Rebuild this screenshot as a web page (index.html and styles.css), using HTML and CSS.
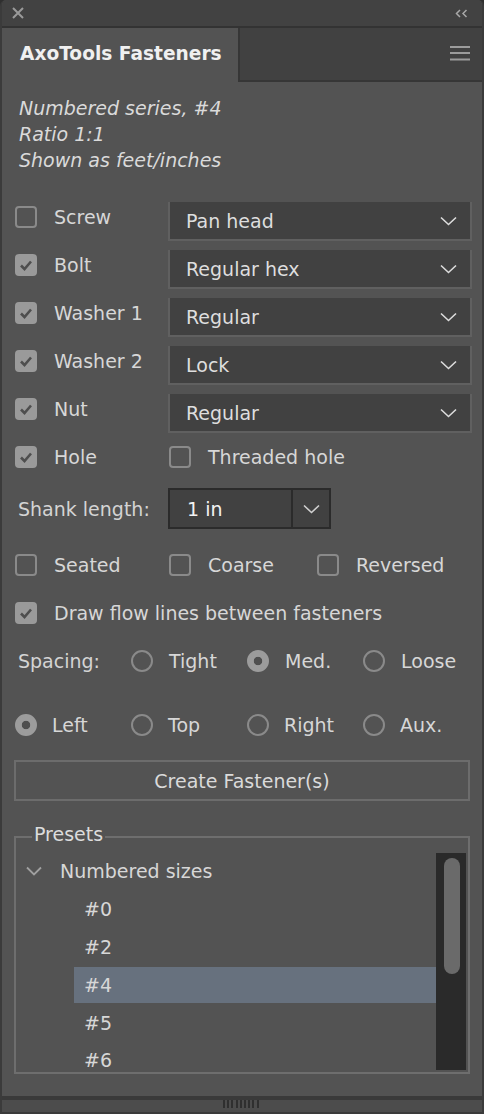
FILE: index.html
```html
<!DOCTYPE html>
<html>
<head>
<meta charset="utf-8">
<link rel="stylesheet" href="styles.css">
</head>
<body>
<div class="window">
  <div class="titlebar">
    <svg class="close" width="12" height="12" viewBox="0 0 12 12"><path d="M1 1L11 11M11 1L1 11" stroke="#9a9a9a" stroke-width="2" fill="none"/></svg>
    <svg class="collapse" width="13" height="9" viewBox="0 0 13 9"><path d="M5 1L1.5 4.5L5 8M11.5 1L8 4.5L11.5 8" stroke="#a8a8a8" stroke-width="1.5" fill="none"/></svg>
  </div>
  <div class="tabs">
    <div class="tab active">AxoTools Fasteners</div>
    <div class="tab-rest">
      <svg width="20" height="15" viewBox="0 0 20 15"><path d="M0 1H20M0 7H20M0 13.5H20" stroke="#9c9c9c" stroke-width="2"/></svg>
    </div>
  </div>
  <div class="content">
    <div class="info">
      <div>Numbered series, #4</div>
      <div>Ratio 1:1</div>
      <div>Shown as feet/inches</div>
    </div>

    <div class="fields">
      <div class="sel-row">
        <label class="cb-item left"><span class="cb"></span><span>Screw</span></label>
        <div class="dropdown"><span>Pan head</span><svg class="chev" width="17" height="10" viewBox="0 0 17 10"><path d="M1 1.5L8.5 8.5L16 1.5" stroke="#dcdcdc" stroke-width="1.6" fill="none"/></svg></div>
      </div>
      <div class="sel-row">
        <label class="cb-item left"><span class="cb on"><svg width="22" height="22" viewBox="0 0 22 22"><path d="M6 11.5L9.5 15L16 7.5" stroke="#4e4e4e" stroke-width="2.6" fill="none"/></svg></span><span>Bolt</span></label>
        <div class="dropdown"><span>Regular hex</span><svg class="chev" width="17" height="10" viewBox="0 0 17 10"><path d="M1 1.5L8.5 8.5L16 1.5" stroke="#dcdcdc" stroke-width="1.6" fill="none"/></svg></div>
      </div>
      <div class="sel-row">
        <label class="cb-item left"><span class="cb on"><svg width="22" height="22" viewBox="0 0 22 22"><path d="M6 11.5L9.5 15L16 7.5" stroke="#4e4e4e" stroke-width="2.6" fill="none"/></svg></span><span>Washer 1</span></label>
        <div class="dropdown"><span>Regular</span><svg class="chev" width="17" height="10" viewBox="0 0 17 10"><path d="M1 1.5L8.5 8.5L16 1.5" stroke="#dcdcdc" stroke-width="1.6" fill="none"/></svg></div>
      </div>
      <div class="sel-row">
        <label class="cb-item left"><span class="cb on"><svg width="22" height="22" viewBox="0 0 22 22"><path d="M6 11.5L9.5 15L16 7.5" stroke="#4e4e4e" stroke-width="2.6" fill="none"/></svg></span><span>Washer 2</span></label>
        <div class="dropdown"><span>Lock</span><svg class="chev" width="17" height="10" viewBox="0 0 17 10"><path d="M1 1.5L8.5 8.5L16 1.5" stroke="#dcdcdc" stroke-width="1.6" fill="none"/></svg></div>
      </div>
      <div class="sel-row">
        <label class="cb-item left"><span class="cb on"><svg width="22" height="22" viewBox="0 0 22 22"><path d="M6 11.5L9.5 15L16 7.5" stroke="#4e4e4e" stroke-width="2.6" fill="none"/></svg></span><span>Nut</span></label>
        <div class="dropdown"><span>Regular</span><svg class="chev" width="17" height="10" viewBox="0 0 17 10"><path d="M1 1.5L8.5 8.5L16 1.5" stroke="#dcdcdc" stroke-width="1.6" fill="none"/></svg></div>
      </div>
      <div class="hole-row">
        <label class="cb-item left"><span class="cb on"><svg width="22" height="22" viewBox="0 0 22 22"><path d="M6 11.5L9.5 15L16 7.5" stroke="#4e4e4e" stroke-width="2.6" fill="none"/></svg></span><span>Hole</span></label>
        <label class="cb-item"><span class="cb"></span><span>Threaded hole</span></label>
      </div>
      <div class="shank-row">
        <span class="shank-label">Shank length:</span>
        <div class="combo">
          <span class="combo-text">1 in</span>
          <span class="combo-btn"><svg width="17" height="10" viewBox="0 0 17 10"><path d="M1 1.5L8.5 8.5L16 1.5" stroke="#d0d0d0" stroke-width="1.6" fill="none"/></svg></span>
        </div>
      </div>
      <div class="opt-row">
        <label class="cb-item"><span class="cb"></span><span>Seated</span></label>
        <label class="cb-item"><span class="cb"></span><span>Coarse</span></label>
        <label class="cb-item"><span class="cb"></span><span>Reversed</span></label>
      </div>
      <div class="flow-row">
        <label class="cb-item"><span class="cb on"><svg width="22" height="22" viewBox="0 0 22 22"><path d="M6 11.5L9.5 15L16 7.5" stroke="#4e4e4e" stroke-width="2.6" fill="none"/></svg></span><span>Draw flow lines between fasteners</span></label>
      </div>
      <div class="radio-row spacing">
        <span class="radio-label">Spacing:</span>
        <label class="rb-item"><span class="rb"></span><span>Tight</span></label>
        <label class="rb-item"><span class="rb on"></span><span>Med.</span></label>
        <label class="rb-item"><span class="rb"></span><span>Loose</span></label>
      </div>
      <div class="radio-row position">
        <label class="rb-item"><span class="rb on"></span><span>Left</span></label>
        <label class="rb-item"><span class="rb"></span><span>Top</span></label>
        <label class="rb-item"><span class="rb"></span><span>Right</span></label>
        <label class="rb-item"><span class="rb"></span><span>Aux.</span></label>
      </div>
      <div class="button">Create Fastener(s)</div>

      <fieldset class="group">
        <legend>Presets</legend>
        <div class="list">
          <div class="tree">
            <div class="tree-row parent"><svg class="tchev" width="16" height="10" viewBox="0 0 16 10"><path d="M1 1.5L8 8.5L15 1.5" stroke="#a0a0a0" stroke-width="1.8" fill="none"/></svg><span>Numbered sizes</span></div>
            <div class="tree-row item">#0</div>
            <div class="tree-row item">#2</div>
            <div class="tree-row item selected">#4</div>
            <div class="tree-row item">#5</div>
            <div class="tree-row item last">#6</div>
          </div>
          <div class="scrollbar"><div class="thumb"></div></div>
        </div>
      </fieldset>
    </div>
  </div>
  <div class="footer"><div class="grip"></div></div>
</div>
</body>
</html>
```

FILE: styles.css
```css
* { box-sizing: border-box; }
html, body { margin: 0; padding: 0; background: #2f2f2f; }
body {
  font-family: "DejaVu Sans", "Liberation Sans", sans-serif;
  font-size: 19px;
  color: #d7d7d7;
}
.window {
  width: 484px;
  height: 1114px;
  display: flex;
  flex-direction: column;
  background: #535353;
  border-left: 2px solid #3b3b3b;
  border-right: 2px solid #3b3b3b;
  border-radius: 6px 6px 0 0;
  overflow: hidden;
}
.titlebar {
  height: 28px;
  flex: none;
  background: #424242;
  border-bottom: 2px solid #333333;
  display: flex;
  align-items: center;
  justify-content: space-between;
  padding: 0 14px 0 10px;
}
.tabs {
  height: 54px;
  flex: none;
  display: flex;
}
.tab.active {
  width: 236px;
  background: #535353;
  color: #f0f0f0;
  font-weight: bold;
  font-size: 18.6px;
  padding-left: 18px;
  display: flex;
  align-items: center;
  padding-bottom: 4px;
}
.tab-rest {
  flex: 1;
  background: #414141;
  border-left: 2px solid #363636;
  border-bottom: 2px solid #363636;
  display: flex;
  align-items: center;
  justify-content: flex-end;
  padding-right: 12px;
  padding-bottom: 2px;
}
.content {
  flex: 1;
  padding: 13px 10px 0 13px;
}
.info {
  font-style: italic;
  line-height: 26px;
  padding-left: 4px;
  color: #dadada;
}
.fields { margin-top: 29px; }
.cb-item, .rb-item {
  display: flex;
  align-items: center;
  gap: 17px;
}
.cb {
  width: 22px;
  height: 22px;
  flex: none;
  border: 2px solid #8a8a8a;
  border-radius: 4px;
  display: flex;
}
.cb.on {
  background: #9a9a9a;
  border-color: #9a9a9a;
}
.cb.on svg { margin: -2px; }
.rb {
  width: 22px;
  height: 22px;
  flex: none;
  border: 2px solid #8a8a8a;
  border-radius: 50%;
}
.rb.on {
  background: radial-gradient(circle, #4f4f4f 0 3.8px, #9c9c9c 4.6px);
  border-color: #9c9c9c;
}
.sel-row {
  display: flex;
  height: 39px;
  margin-bottom: 9px;
}
.left {
  width: 153px;
  height: 30px;
  flex: none;
}
.dropdown {
  width: 304px;
  height: 39px;
  background: #414141;
  border: 2px solid #606060;
  border-top: none;
  display: flex;
  align-items: center;
  justify-content: space-between;
  padding: 0 13px 0 16px;
  color: #dedede;
}
.hole-row {
  display: flex;
  height: 30px;
  margin-bottom: 16px;
}
.hole-row .left { width: 154px; }
.shank-row {
  display: flex;
  align-items: center;
  height: 41px;
  margin-bottom: 21px;
}
.shank-label {
  width: 153px;
  padding-left: 3px;
  color: #d4d4d4;
}
.combo {
  width: 163px;
  height: 41px;
  display: flex;
  background: #414141;
  border: 2px solid #2b2b2b;
}
.combo-text {
  width: 123px;
  border-right: 2px solid #2b2b2b;
  display: flex;
  align-items: center;
  padding-left: 17px;
  color: #f2f2f2;
}
.combo-btn {
  flex: 1;
  display: flex;
  align-items: center;
  justify-content: center;
}
.opt-row {
  display: grid;
  grid-template-columns: 154px 148px auto;
  height: 30px;
  margin-bottom: 18px;
}
.flow-row {
  display: flex;
  height: 30px;
  margin-bottom: 18px;
}
.radio-row {
  display: grid;
  grid-template-columns: 116px 116px 116px auto;
  height: 30px;
  align-items: center;
}
.radio-row .rb-item { gap: 15px; }
.radio-row.spacing .rb-item { gap: 16px; }
.radio-label { padding-left: 3px; color: #d4d4d4; }
.radio-row.spacing { margin-bottom: 34px; }
.radio-row.position { margin-bottom: 20px; }
.button {
  margin-left: -1px;
  width: 456px;
  height: 41px;
  border: 2px solid #6c6c6c;
  display: flex;
  align-items: center;
  justify-content: center;
  color: #dadada;
}
.group {
  margin: 23px 0 0 -1px;
  width: 456px;
  padding: 3px 0 2px 0;
  border: 2px solid #6e6e6e;
  min-width: 0;
}
.group legend {
  margin-left: 16px;
  padding: 0 2px 6px;
  line-height: 20px;
  color: #dcdcdc;
}
.list {
  display: flex;
  height: 217px;
  padding-right: 2px;
}
.tree {
  flex: 1;
  overflow: hidden;
}
.tree-row {
  height: 36px;
  margin-bottom: 2px;
  display: flex;
  align-items: center;
}
.tree-row.parent { padding-left: 10px; }
.tchev { margin-right: 18px; }
.tree-row.item {
  margin-left: 58px;
  padding-left: 10px;
}
.tree-row.last {
  height: 27px;
  margin-bottom: 0;
  align-items: flex-start;
  padding-top: 8px;
  line-height: 19px;
}
.tree-row.selected { background: #67717e; }
.scrollbar {
  width: 30px;
  background: #2a2a2a;
  padding: 5px 6px 0 8px;
}
.thumb {
  height: 116px;
  background: #6a6a6a;
  border-radius: 8px;
}
.footer {
  height: 18px;
  flex: none;
  background: #4c4c4c;
  border-top: 4px solid #3a3a3a;
  border-bottom: 2px solid #3a3a3a;
  display: flex;
  justify-content: center;
}
.grip {
  width: 38px;
  height: 8px;
  background: repeating-linear-gradient(90deg, #2f2f2f 0 2px, transparent 2px 4.2px);
}
```
